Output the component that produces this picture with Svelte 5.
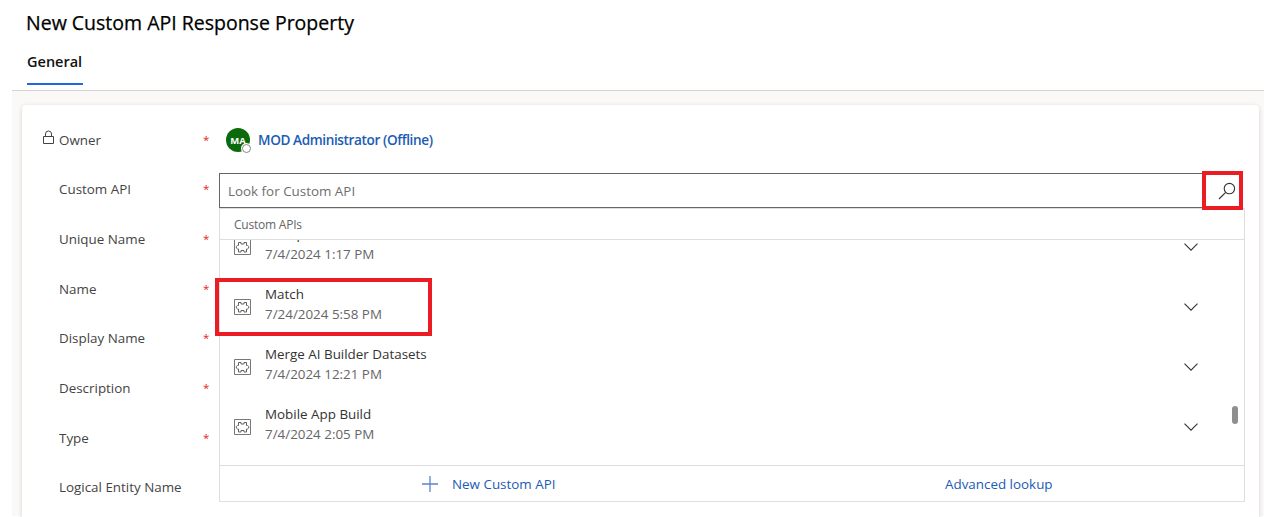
<script>
  const fields = [
    { label: 'Owner', required: true, locked: true },
    { label: 'Custom API', required: true },
    { label: 'Unique Name', required: true },
    { label: 'Name', required: true },
    { label: 'Display Name', required: true },
    { label: 'Description', required: true },
    { label: 'Type', required: true },
    { label: 'Logical Entity Name', required: false }
  ];
  const results = [
    { name: 'Group', date: '7/4/2024 1:17 PM' },
    { name: 'Match', date: '7/24/2024 5:58 PM', marked: true },
    { name: 'Merge AI Builder Datasets', date: '7/4/2024 12:21 PM' },
    { name: 'Mobile App Build', date: '7/4/2024 2:05 PM' }
  ];
</script>

<div class="page">
  <header>
    <h1>New Custom API Response Property</h1>
    <nav><span class="tab">General</span></nav>
  </header>
  <main>
    <section class="card">
      <div class="labels">
        {#each fields as f}
          <div class="row">
            <span class="lock">
              {#if f.locked}
                <svg width="12" height="15" viewBox="0 0 12 15" fill="none" stroke="#444" stroke-width="1"><path d="M.5 6.5h10v7H.5zM2.5 6.5V4a3 3 0 0 1 6 0v2.5" /></svg>
              {/if}
            </span>
            <span class="label">{f.label}</span>
            {#if f.required}<span class="star">*</span>{/if}
          </div>
        {/each}
      </div>

      <div class="values">
        <div class="owner">
          <span class="avatar">MA<i></i></span>
          <a class="person">MOD Administrator (Offline)</a>
        </div>
        <div class="search">
          <span class="placeholder">Look for Custom API</span>
          <span class="find">
            <svg width="18" height="18" viewBox="0 0 18 18" fill="none" stroke="#333" stroke-width="1.1"><circle cx="11.4" cy="6.6" r="5.2" /><path d="M7.7 10.3 1 17" /></svg>
          </span>
        </div>
        <div class="menu">
          <div class="menu-head">Custom APIs</div>
          <div class="list">
            {#each results as r}
              <div class="item" class:marked={r.marked}>
                <svg class="entity" width="17" height="17" viewBox="0 0 17 17" fill="none"><path stroke="#777" d="M.5.5h16v15H.5z" /><path stroke="#5f6368" d="M4.5 3.500h2.500v1.500h3V3.500h2.500v3h1l1.200 1v1.500l-1.200 1h-1v3H10V11.500H7V13H4.500v-3h-1l-1.200-1V7.500l1.200-1h1z" /></svg>
                <div class="text">
                  <div class="name">{r.name}</div>
                  <div class="date">{r.date}</div>
                </div>
                <svg class="chev" width="14" height="8" viewBox="0 0 14 8" fill="none" stroke="#333" stroke-width="1.1"><path d="M.5.6 7 7.100 13.500.6" /></svg>
              </div>
            {/each}
            <span class="thumb"></span>
          </div>
          <div class="menu-foot">
            <a class="new"><svg width="16" height="16" viewBox="0 0 16 16" stroke="#5a84cf" stroke-width="1.3"><path d="M0 8h16M8 0v16" /></svg><span>New Custom API</span></a>
            <a class="adv">Advanced lookup</a>
          </div>
        </div>
      </div>
    </section>
  </main>
</div>

<style>
  :global(body) { margin: 0; background: #fff; overflow: hidden; }
  .page { box-sizing: border-box; width: 1270px; height: 517px; padding: 0 6px 1px 12px; display: flex; flex-direction: column; overflow: hidden; font: 13.4px/20px "Open Sans", "Noto Sans", sans-serif; color: #444; }
  header { height: 91px; box-sizing: border-box; padding: 9px 15px 0 14px; flex: none; border-bottom: 1px solid #d5d4d2; }
  h1 { margin: 0; font-size: 19.5px; line-height: 28px; font-weight: 500; color: #000; -webkit-text-stroke: .25px #000; white-space: nowrap; }
  nav { margin-top: 14px; padding-left: 1px; display: flex; }
  .tab { height: 32px; line-height: 21px; border-bottom: 2px solid #2266e3; color: #111; font-weight: 600; font-size: 14.5px; width: 56px; }
  main { flex: 1; min-height: 0; background: #faf9f8; padding: 14px 5px 0 10px; }
  .card { box-sizing: border-box; height: 440px; background: #fff; border-radius: 4px; box-shadow: 0 1px 4px rgba(0, 0, 0, .16); display: flex; padding: 9px 14px 0 20px; }
  .labels { width: 177px; flex: none; padding-top: .7px; }
  .row { display: flex; height: 49.7px; align-items: center; white-space: nowrap; }
  .lock { width: 16px; padding-left: 1px; display: flex; padding-bottom: 4px; }
  .label { flex: 1; }
  .star { width: 16px; color: #e8191e; font-size: 11.5px; line-height: 20px; }
  .values { flex: 1; min-width: 0; }
  .owner { height: 52px; margin-bottom: 7px; display: flex; align-items: center; gap: 8px; padding-left: 7px; }
  .avatar { position: relative; width: 24px; height: 24px; border-radius: 50%; background: #0b6a0b; color: #fff; font-size: 9.5px; line-height: 25px; font-weight: 700; text-align: center; }
  .avatar i { position: absolute; right: -1px; bottom: -1px; width: 7px; height: 7px; border: 1px solid #8a8886; border-radius: 50%; background: #fff; box-shadow: 0 0 0 1px #fff; }
  .person { color: #1b5bb5; font-weight: 600; font-size: 13.6px; letter-spacing: -.4px; white-space: nowrap; }
  .search { box-sizing: border-box; height: 35px; width: 1024px; border: 1px solid #666; display: flex; align-items: center; justify-content: space-between; padding-left: 8px; color: #6e6e6e; }
  .find { position: relative; box-sizing: border-box; width: 41px; height: 39px; margin-right: -1px; border: 4px solid #ec1c24; background: #fff; display: flex; align-items: center; padding-left: 12px; z-index: 1; }
  .find svg { flex: none; }
  .menu { box-sizing: border-box; height: 294px; border: 1px solid #dedede; }
  .menu-head { height: 30px; line-height: 31px; padding-left: 14px; font-size: 12px; letter-spacing: -.22px; color: #666; border-bottom: 1px solid #dedede; }
  .list { position: relative; height: 225px; }
  .item { height: 60px; box-sizing: border-box; display: flex; align-items: center; padding: 0 46px 0 14px; position: relative; }
  .item:first-of-type { height: 34px; overflow: hidden; }
  .item:first-of-type .text { margin-top: -26px; }
  .item:first-of-type .entity, .item:first-of-type .chev { margin-top: -20px; }
  .entity { flex: none; margin-top: 7px; margin-right: 14px; }
  .text { flex: 1; }
  .name { color: #333; }
  .date { color: #666; }
  .chev { flex: none; margin-top: 6px; }
  .marked::after { content: ""; position: absolute; left: -5px; top: 4px; width: 209px; height: 50px; border: 4px solid #ec1c24; }
  .thumb { position: absolute; right: 6px; top: 166px; width: 6px; height: 18px; border-radius: 3px; background: #8f8f8f; }
  .menu-foot { height: 35px; border-top: 1px solid #dedede; display: flex; align-items: center; color: #1b5bb5; }
  .new { display: flex; align-items: center; gap: 14px; margin-left: 202px; width: 523px; }
</style>
